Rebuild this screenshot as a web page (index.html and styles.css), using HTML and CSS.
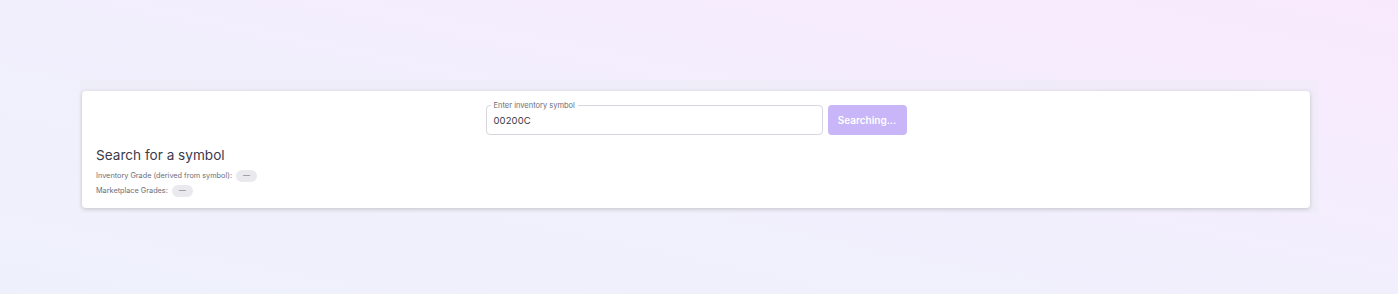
FILE: index.html
```html
<!DOCTYPE html>
<html>
<head>
<meta charset="utf-8">
<link rel="stylesheet" href="styles.css">
</head>
<body>
<div class="page">
  <div class="shell">
    <div class="card">
      <div class="search-row">
        <div class="field">
          <span class="field-label">Enter inventory symbol</span>
          <div class="field-value">00200C</div>
        </div>
        <button class="btn">Searching...</button>
      </div>
      <h2 class="title">Search for a symbol</h2>
      <div class="meta">
        <span>Inventory Grade (derived from symbol):</span>
        <span class="chip">—</span>
      </div>
      <div class="meta">
        <span>Marketplace Grades:</span>
        <span class="chip">—</span>
      </div>
    </div>
  </div>
</div>
</body>
</html>
```
FILE: styles.css
```css
html, body {
  margin: 0;
  padding: 0;
}
body {
  width: 1398px;
  height: 294px;
  overflow: hidden;
  font-family: Inter, "Noto Sans", "Liberation Sans", sans-serif;
  background: linear-gradient(to top right, #eef1fc 0%, #f2effd 50%, #f9e9fd 100%);
}
.page {
  padding-top: 80px;
}
.shell {
  width: 1228px;
  margin: 0 auto;
  padding: 11px 8px 5px 2px;
  background: rgba(236, 236, 244, 0.45);
}
.card {
  background: #fff;
  border-radius: 4px;
  box-shadow: 0 1px 4px rgba(0, 0, 0, 0.18);
  padding: 14px 14px 10px;
}
.search-row {
  display: flex;
  justify-content: center;
  gap: 5px;
}
.field {
  position: relative;
  height: 28px;
  border: 1px solid #d6d6dc;
  border-radius: 4px;
  display: flex;
  align-items: center;
  padding: 0 0 0 7px;
  box-sizing: content-box;
  width: 328px;
}
.field-label {
  position: absolute;
  top: -5px;
  left: 4px;
  padding: 0 3px;
  background: #fff;
  font-size: 7.5px;
  line-height: 9px;
  color: #6b6b75;
}
.field-value {
  font-size: 9.5px;
  color: #3a3a45;
  letter-spacing: 0.1px;
}
.btn {
  width: 79px;
  height: 30px;
  border: none;
  border-radius: 4px;
  background: #c8b6f8;
  color: #fff;
  font-family: inherit;
  font-size: 10px;
  font-weight: 600;
  padding: 0;
}
.title {
  margin: 11px 0 4px;
  font-size: 13.6px;
  line-height: 18px;
  font-weight: 400;
  color: #3b3a4e;
}
.meta {
  display: flex;
  align-items: center;
  gap: 4px;
  height: 15px;
  font-size: 7.3px;
  color: #6e6e78;
}
.chip {
  display: inline-flex;
  align-items: center;
  justify-content: center;
  width: 21px;
  height: 12px;
  border-radius: 6px;
  background: #e9e9ee;
  color: #777;
  font-size: 7px;
}
```
